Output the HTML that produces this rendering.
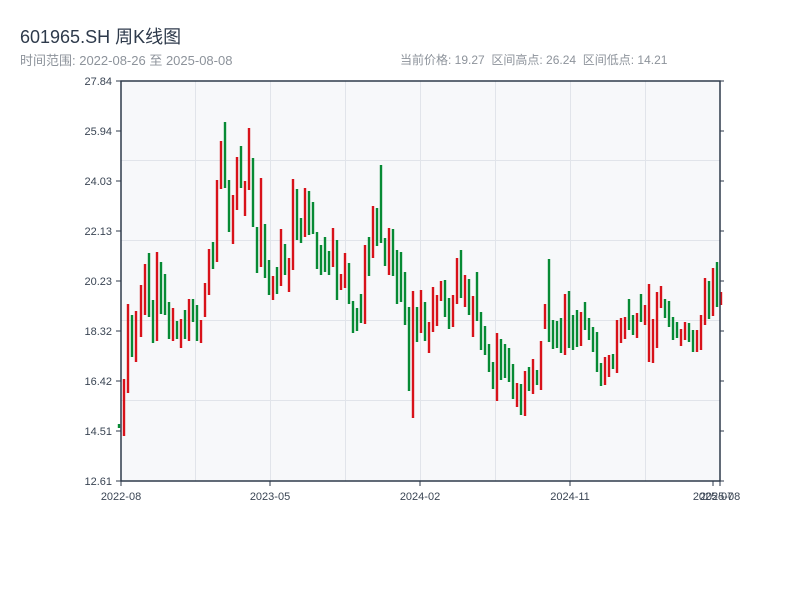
<!DOCTYPE html>
<html><head><meta charset="utf-8"><style>
body{margin:0;width:800px;height:600px;background:#fff;overflow:hidden;font-family:"Liberation Sans","Noto Sans CJK SC",sans-serif}
.t{position:absolute;left:20px;top:23px;font-size:18px;color:#2e3a4b}
.s{position:absolute;top:51px;font-size:12px;color:#8d939b;white-space:pre}
svg{position:absolute;left:0;top:0}
</style></head><body>
<div class="t">601965.SH 周K线图</div>
<div class="s" style="left:20px;font-size:13px;top:50px">时间范围: 2022-08-26 至 2025-08-08</div>
<div class="s" style="left:400px">当前价格: 19.27  区间高点: 26.24  区间低点: 14.21</div>
<svg width="800" height="600" font-family="Liberation Sans, sans-serif" font-size="11" fill="#3a4554">
<rect x="121" y="81" width="599" height="400" fill="#f7f8fa"/>
<g stroke="#e1e4ea" stroke-width="1">
<path d="M195.5 81V481M270.5 81V481M345.5 81V481M420.5 81V481M495.5 81V481M570.5 81V481M645.5 81V481M121 160.5H720M121 240.5H720M121 320.5H720M121 400.5H720"/>
</g>
<g id="c"></g>
<g stroke="#2e3a4b" fill="none">
<path d="M121 81H720V481H121Z" stroke-width="1.5"/>
<path d="M116 81H121M116 131H121M116 181H121M116 231H121M116 281H121M116 331H121M116 381H121M116 431H121M116 481H121M720 81H724M720 131H724M720 181H724M720 231H724M720 281H724M720 331H724M720 381H724M720 431H724M720 481H724M121 481V486M270 481V486M420 481V486M570 481V486M713 481V486M720 481V486"/>
</g>
<g text-anchor="end">
<text x="112" y="85">27.84</text><text x="112" y="135">25.94</text><text x="112" y="185">24.03</text><text x="112" y="235">22.13</text><text x="112" y="285">20.23</text><text x="112" y="335">18.32</text><text x="112" y="385">16.42</text><text x="112" y="435">14.51</text><text x="112" y="485">12.61</text>
</g>
<g text-anchor="middle">
<text x="121" y="500">2022-08</text><text x="270" y="500">2023-05</text><text x="420" y="500">2024-02</text><text x="570" y="500">2024-11</text><text x="713" y="500">2025-07</text><text x="720" y="500">2025-08</text>
</g>
</svg>
<script>
var d=[[119,424,428,'g'],[124,379,436,'r'],[128,304,393,'r'],[132,315,357,'g'],[136,311,362,'r'],[141,285,337,'r'],[145,264,315,'r'],[149,253,317,'g'],[153,300,343,'g'],[157,252,341,'r'],[161,262,314,'g'],[165,274,315,'g'],[169,302,339,'g'],[173,308,341,'r'],[177,321,339,'g'],[181,319,348,'r'],[185,310,339,'g'],[189,299,341,'r'],[193,299,322,'g'],[197,305,341,'g'],[201,320,343,'r'],[205,283,317,'r'],[209,249,295,'r'],[213,242,269,'g'],[217,180,262,'r'],[221,141,189,'r'],[225,122,188,'g'],[229,180,232,'g'],[233,195,244,'r'],[237,157,210,'r'],[241,146,188,'g'],[245,181,216,'r'],[249,128,190,'r'],[253,158,227,'g'],[257,227,273,'g'],[261,178,267,'r'],[265,224,278,'g'],[269,260,295,'g'],[273,276,300,'r'],[277,267,294,'g'],[281,229,286,'r'],[285,244,275,'g'],[289,258,292,'r'],[293,179,270,'r'],[297,189,240,'g'],[301,218,243,'g'],[305,188,237,'r'],[309,191,235,'g'],[313,202,234,'g'],[317,232,269,'g'],[321,245,275,'g'],[325,237,272,'g'],[329,251,275,'g'],[333,228,267,'r'],[337,240,300,'g'],[341,274,290,'r'],[345,253,288,'r'],[349,263,304,'g'],[353,301,333,'g'],[357,308,331,'g'],[361,294,323,'g'],[365,245,324,'r'],[369,237,276,'g'],[373,206,258,'r'],[377,208,246,'g'],[381,165,243,'g'],[385,238,266,'g'],[389,228,275,'r'],[393,229,276,'g'],[397,250,304,'g'],[401,252,302,'g'],[405,272,325,'g'],[409,307,391,'g'],[413,291,418,'r'],[417,307,342,'g'],[421,290,333,'r'],[425,302,341,'g'],[429,322,353,'r'],[433,287,332,'r'],[437,295,326,'r'],[441,281,301,'r'],[445,280,317,'g'],[449,298,329,'g'],[453,295,327,'r'],[457,258,304,'r'],[461,250,298,'g'],[465,275,307,'r'],[469,279,315,'g'],[473,296,337,'r'],[477,272,321,'g'],[481,312,350,'g'],[485,326,355,'g'],[489,344,372,'g'],[493,362,389,'g'],[497,333,401,'r'],[501,339,380,'g'],[505,344,378,'g'],[509,348,382,'g'],[513,364,399,'g'],[517,383,407,'r'],[521,384,415,'g'],[525,371,416,'r'],[529,367,391,'g'],[533,359,394,'r'],[537,370,385,'g'],[541,341,390,'r'],[545,304,329,'r'],[549,259,342,'g'],[553,320,349,'g'],[557,321,348,'g'],[561,318,353,'g'],[565,294,355,'r'],[569,291,348,'g'],[573,315,350,'g'],[577,310,347,'g'],[581,312,346,'r'],[585,302,330,'g'],[589,318,340,'g'],[593,327,352,'g'],[597,332,372,'g'],[601,363,386,'g'],[605,357,385,'r'],[609,355,377,'r'],[613,354,369,'g'],[617,320,373,'r'],[621,318,343,'r'],[625,317,339,'r'],[629,299,330,'g'],[633,315,335,'g'],[637,313,338,'r'],[641,294,322,'g'],[645,305,325,'r'],[649,284,362,'r'],[653,319,363,'r'],[657,292,348,'r'],[661,286,308,'r'],[665,299,318,'g'],[669,301,327,'g'],[673,317,340,'g'],[677,322,338,'g'],[681,329,346,'r'],[685,322,340,'r'],[689,323,342,'g'],[693,330,352,'g'],[697,330,352,'r'],[701,315,350,'r'],[705,278,325,'r'],[709,281,319,'g'],[713,268,316,'r'],[717,262,307,'g'],[721,292,305,'r']];
var s='';d.forEach(function(c){s+='<rect x="'+(c[0]-1.2)+'" y="'+c[1]+'" width="2.4" height="'+(c[2]-c[1])+'" fill="'+(c[3]=='r'?'#d8121a':'#078a34')+'"/>';});
document.getElementById('c').innerHTML=s;
</script>
</body></html>
